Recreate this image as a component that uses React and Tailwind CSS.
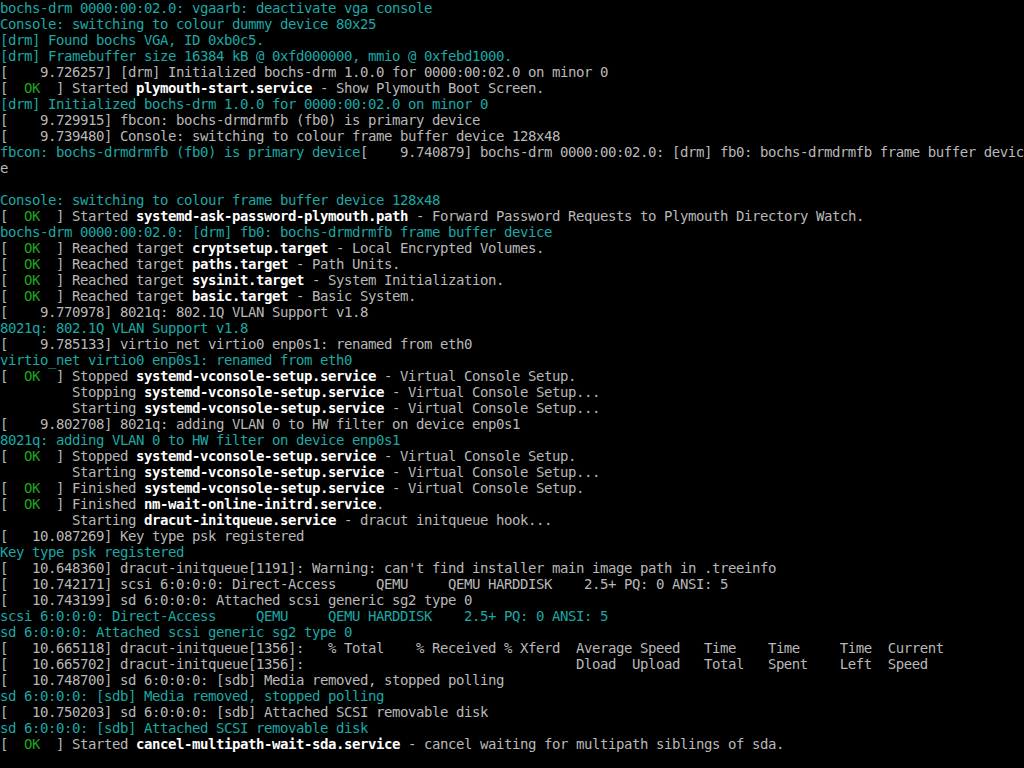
import React from "react";

const C = "c", G = "g", W = "w", O = "o";

const ok = (verb, svc, rest) => [[G, "[  "], [O, "OK"], [G, "  ] " + verb + " "], [W, svc], [G, rest]];
const job = (verb, svc, rest) => [[G, "         " + verb + " "], [W, svc], [G, rest]];

const lines = [
  [[C, "bochs-drm 0000:00:02.0: vgaarb: deactivate vga console"]],
  [[C, "Console: switching to colour dummy device 80x25"]],
  [[C, "[drm] Found bochs VGA, ID 0xb0c5."]],
  [[C, "[drm] Framebuffer size 16384 kB @ 0xfd000000, mmio @ 0xfebd1000."]],
  [[G, "[    9.726257] [drm] Initialized bochs-drm 1.0.0 for 0000:00:02.0 on minor 0"]],
  ok("Started", "plymouth-start.service", " - Show Plymouth Boot Screen."),
  [[C, "[drm] Initialized bochs-drm 1.0.0 for 0000:00:02.0 on minor 0"]],
  [[G, "[    9.729915] fbcon: bochs-drmdrmfb (fb0) is primary device"]],
  [[G, "[    9.739480] Console: switching to colour frame buffer device 128x48"]],
  [[C, "fbcon: bochs-drmdrmfb (fb0) is primary device"], [G, "[    9.740879] bochs-drm 0000:00:02.0: [drm] fb0: bochs-drmdrmfb frame buffer devic"]],
  [[G, "e"]],
  [],
  [[C, "Console: switching to colour frame buffer device 128x48"]],
  ok("Started", "systemd-ask-password-plymouth.path", " - Forward Password Requests to Plymouth Directory Watch."),
  [[C, "bochs-drm 0000:00:02.0: [drm] fb0: bochs-drmdrmfb frame buffer device"]],
  ok("Reached target", "cryptsetup.target", " - Local Encrypted Volumes."),
  ok("Reached target", "paths.target", " - Path Units."),
  ok("Reached target", "sysinit.target", " - System Initialization."),
  ok("Reached target", "basic.target", " - Basic System."),
  [[G, "[    9.770978] 8021q: 802.1Q VLAN Support v1.8"]],
  [[C, "8021q: 802.1Q VLAN Support v1.8"]],
  [[G, "[    9.785133] virtio_net virtio0 enp0s1: renamed from eth0"]],
  [[C, "virtio_net virtio0 enp0s1: renamed from eth0"]],
  ok("Stopped", "systemd-vconsole-setup.service", " - Virtual Console Setup."),
  job("Stopping", "systemd-vconsole-setup.service", " - Virtual Console Setup..."),
  job("Starting", "systemd-vconsole-setup.service", " - Virtual Console Setup..."),
  [[G, "[    9.802708] 8021q: adding VLAN 0 to HW filter on device enp0s1"]],
  [[C, "8021q: adding VLAN 0 to HW filter on device enp0s1"]],
  ok("Stopped", "systemd-vconsole-setup.service", " - Virtual Console Setup."),
  job("Starting", "systemd-vconsole-setup.service", " - Virtual Console Setup..."),
  ok("Finished", "systemd-vconsole-setup.service", " - Virtual Console Setup."),
  ok("Finished", "nm-wait-online-initrd.service", "."),
  job("Starting", "dracut-initqueue.service", " - dracut initqueue hook..."),
  [[G, "[   10.087269] Key type psk registered"]],
  [[C, "Key type psk registered"]],
  [[G, "[   10.648360] dracut-initqueue[1191]: Warning: can't find installer main image path in .treeinfo"]],
  [[G, "[   10.742171] scsi 6:0:0:0: Direct-Access     QEMU     QEMU HARDDISK    2.5+ PQ: 0 ANSI: 5"]],
  [[G, "[   10.743199] sd 6:0:0:0: Attached scsi generic sg2 type 0"]],
  [[C, "scsi 6:0:0:0: Direct-Access     QEMU     QEMU HARDDISK    2.5+ PQ: 0 ANSI: 5"]],
  [[C, "sd 6:0:0:0: Attached scsi generic sg2 type 0"]],
  [[G, "[   10.665118] dracut-initqueue[1356]:   % Total    % Received % Xferd  Average Speed   Time    Time     Time  Current"]],
  [[G, "[   10.665702] dracut-initqueue[1356]:                                  Dload  Upload   Total   Spent    Left  Speed"]],
  [[G, "[   10.748700] sd 6:0:0:0: [sdb] Media removed, stopped polling"]],
  [[C, "sd 6:0:0:0: [sdb] Media removed, stopped polling"]],
  [[G, "[   10.750203] sd 6:0:0:0: [sdb] Attached SCSI removable disk"]],
  [[C, "sd 6:0:0:0: [sdb] Attached SCSI removable disk"]],
  ok("Started", "cancel-multipath-wait-sda.service", " - cancel waiting for multipath siblings of sda."),
  [],
];

function Seg({ kind, text }) {
  if (kind === C) return <span className="text-[#1aa8a6]">{text}</span>;
  if (kind === O) return <span className="text-[#1fa81f]">{text}</span>;
  if (kind === W) return <span className="text-white font-bold">{text}</span>;
  return <span className="text-[#b8b8b8]">{text}</span>;
}

export default function App() {
  return (
    <div
      className="w-[1024px] h-[768px] bg-black overflow-hidden flex flex-col text-[14px] leading-[16px] tracking-[-0.43px] whitespace-pre"
      style={{ fontFamily: '"DejaVu Sans Mono", "Liberation Mono", monospace' }}
    >
      {lines.map((segs, i) => (
        <div key={i} className="h-[16px] shrink-0">
          {segs.map((s, j) => (
            <Seg key={j} kind={s[0]} text={s[1]} />
          ))}
        </div>
      ))}
    </div>
  );
}
